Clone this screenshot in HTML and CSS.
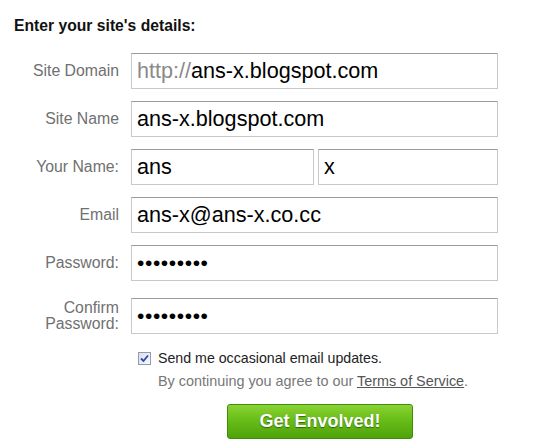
FILE: index.html
```html
<!DOCTYPE html>
<html lang="en">
<head>
<meta charset="utf-8">
<title>Enter your site's details</title>
<link rel="stylesheet" href="styles.css">
</head>
<body>
<div class="page">
  <h2 class="title">Enter your site's details:</h2>
  <form class="signup">
    <label class="label" for="domain">Site Domain</label>
    <div class="field domain">
      <span class="prefix">http://</span>
      <input class="bare" id="domain" type="text" value="ans-x.blogspot.com" readonly>
    </div>

    <label class="label" for="sitename">Site Name</label>
    <input class="field" id="sitename" type="text" value="ans-x.blogspot.com" readonly>

    <label class="label" for="first">Your Name:</label>
    <div class="name-pair">
      <input class="field" id="first" type="text" value="ans" readonly>
      <input class="field" id="last" type="text" value="x" readonly>
    </div>

    <label class="label" for="email">Email</label>
    <input class="field" id="email" type="text" value="ans-x@ans-x.co.cc" readonly>

    <label class="label" for="pw">Password:</label>
    <input class="field pw" id="pw" type="password" value="ansxansxa" readonly>

    <label class="label confirm" for="pw2">Confirm<br>Password:</label>
    <input class="field pw confirm" id="pw2" type="password" value="ansxansxa" readonly>
  </form>

  <div class="extras">
    <div class="opt-in">
      <span class="check" aria-hidden="true">
        <svg width="9" height="9" viewBox="0 0 9 9"><path d="M1 4.5 L3.5 7 L8 1.5" fill="none" stroke="#2a48a8" stroke-width="1.8"/></svg>
      </span>
      <span>Send me occasional email updates.</span>
    </div>
    <div class="terms">By continuing you agree to our <a href="#" class="tos">Terms of Service</a>.</div>
    <button type="button" class="go">Get Envolved!</button>
  </div>
</div>
</body>
</html>
```

FILE: styles.css
```css
html, body {
  margin: 0;
  padding: 0;
  background: #fff;
}

body {
  font-family: "Liberation Sans", Arial, sans-serif;
  color: #111;
}

.page {
  padding: 17px 0 0 14px;
}

.title {
  margin: 0;
  font-size: 15.7px;
  line-height: 17px;
  font-weight: bold;
  color: #111;
}

.signup {
  display: grid;
  grid-template-columns: 105px 367px;
  column-gap: 12px;
  row-gap: 12px;
  margin-top: 19px;
}

.label {
  align-self: center;
  text-align: right;
  font-size: 15.8px;
  line-height: 16px;
  color: #707070;
}

.field {
  box-sizing: border-box;
  height: 36px;
  width: 100%;
  margin: 0;
  padding: 0 5px;
  border: 1px solid #c9c9c9;
  border-top-color: #9a9a9a;
  border-radius: 0;
  background: #fff;
  font-family: "Liberation Sans", Arial, sans-serif;
  font-size: 21.6px;
  color: #000;
  outline: none;
}

.domain {
  display: flex;
  align-items: center;
}

.prefix {
  color: #8a8a8a;
}

.bare {
  flex: 1;
  min-width: 0;
  border: none;
  padding: 0;
  margin: 0;
  font: inherit;
  color: #000;
  background: transparent;
  outline: none;
}

.name-pair {
  display: grid;
  grid-template-columns: 183px 180px;
  column-gap: 4px;
}

.pw {
  font-size: 21px;
  letter-spacing: 0.6px;
}

.confirm {
  margin-top: 5px;
}

.extras {
  margin-left: 124px;
  margin-top: 16px;
}

.opt-in {
  display: flex;
  align-items: center;
  gap: 7px;
  height: 16px;
  font-size: 14.2px;
  color: #222;
}

.check {
  box-sizing: border-box;
  width: 13px;
  height: 13px;
  border: 1px solid #8d9bb5;
  background: linear-gradient(135deg, #dcdfe6 0%, #f7f8fa 100%);
  display: flex;
  align-items: center;
  justify-content: center;
}

.check svg {
  display: block;
}

.terms {
  margin-top: 7px;
  margin-left: 20px;
  font-size: 14.4px;
  line-height: 16px;
  color: #777;
}

.tos {
  color: #555;
  text-decoration: underline;
}

.go {
  display: block;
  margin-top: 15px;
  margin-left: 89px;
  box-sizing: border-box;
  width: 186px;
  height: 35px;
  border: 1px solid #3e8c0c;
  border-radius: 3px;
  background: linear-gradient(to bottom, #8ad335 0%, #69bd17 45%, #4fa30b 100%);
  font-family: "Liberation Sans", Arial, sans-serif;
  font-size: 18px;
  font-weight: bold;
  color: #fff;
  text-shadow: 0 1px 1px #2f6b08;
  cursor: pointer;
  padding: 0;
}
```
